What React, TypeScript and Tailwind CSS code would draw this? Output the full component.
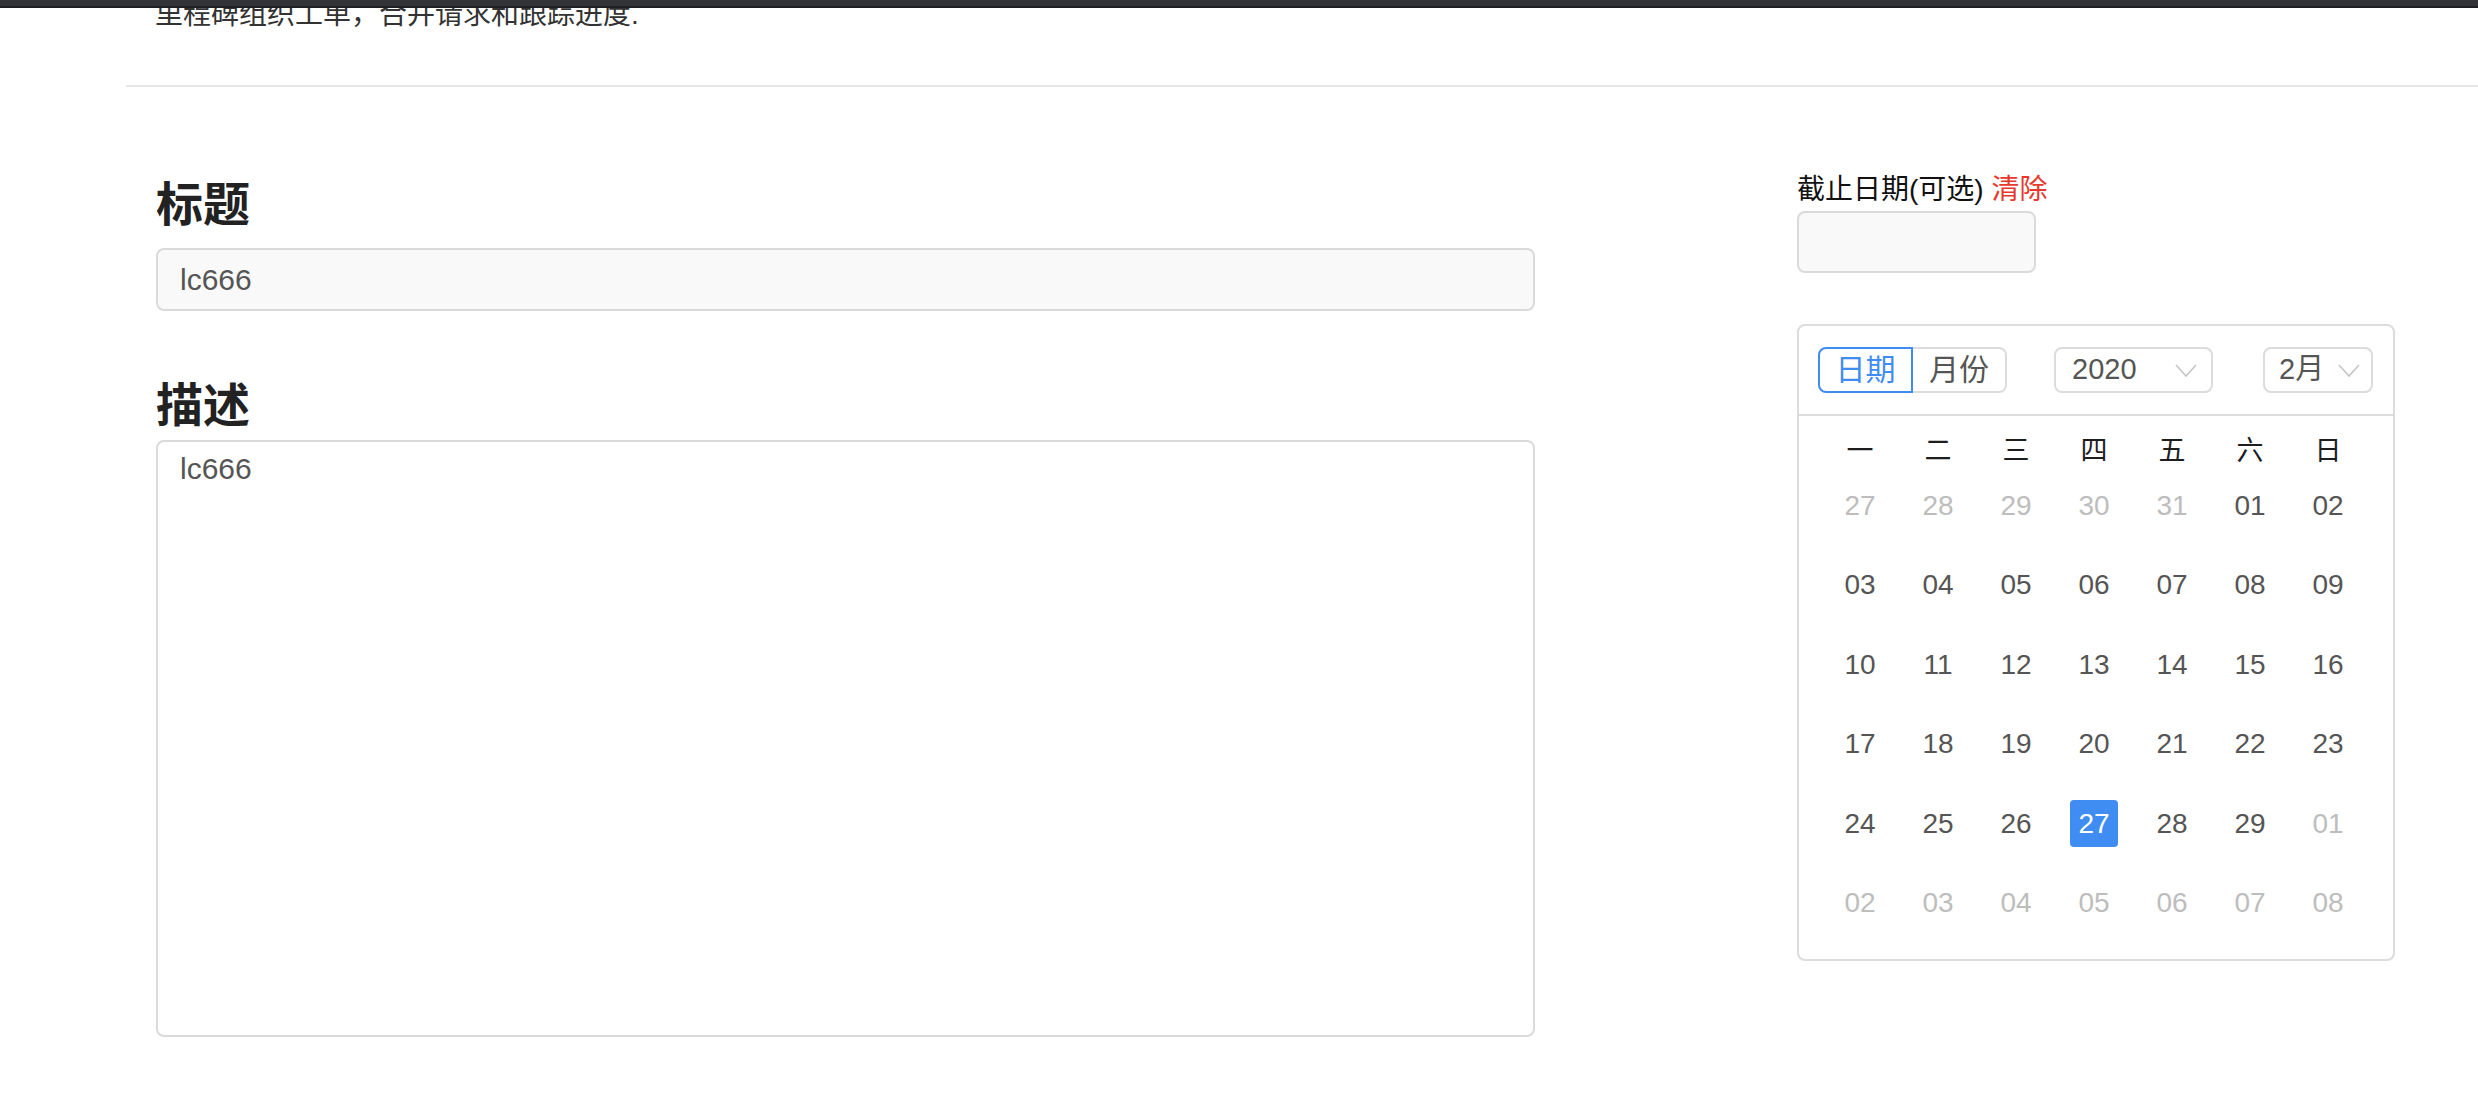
import * as React from 'react'

type Day = { label: string; muted: boolean }

const weekdays = ['一', '二', '三', '四', '五', '六', '日']

function buildDays(): Day[][] {
  const days: Day[] = []
  for (let d = 27; d <= 31; d++) days.push({ label: String(d), muted: true })
  for (let d = 1; d <= 29; d++) days.push({ label: String(d).padStart(2, '0'), muted: false })
  for (let d = 1; d <= 8; d++) days.push({ label: String(d).padStart(2, '0'), muted: true })
  const rows: Day[][] = []
  for (let i = 0; i < days.length; i += 7) rows.push(days.slice(i, i + 7))
  return rows
}

function Chevron() {
  return (
    <svg width="22" height="13" viewBox="0 0 22 13" fill="none" className="shrink-0">
      <polyline points="1,1 11,12 21,1" stroke="#c4c4c4" strokeWidth="1.6" />
    </svg>
  )
}

function Calendar() {
  const rows = buildDays()
  return (
    <div className="mt-[51px] h-[637px] w-[598px] rounded-[8px] border-2 border-[#dcdcdc]">
      <div className="flex items-center border-b-2 border-[#dcdcdc] pt-[21px] pr-[20px] pb-[21px] pl-[19px]">
        <div className="flex h-[46px] text-[30px] leading-[42px]">
          <div className="flex w-[95px] items-center justify-center rounded-l-[8px] border-2 border-[#3f8cf2] text-[#3f8cf2]">
            日期
          </div>
          <div className="flex w-[94px] items-center justify-center rounded-r-[8px] border-2 border-l-0 border-[#dcdcdc] text-[#555]">
            月份
          </div>
        </div>
        <div className="ml-[47px] flex h-[46px] w-[159px] items-center justify-between rounded-[8px] border-2 border-[#dcdcdc] pr-[14px] pl-[16px] text-[29px] text-[#555]">
          <span>2020</span>
          <Chevron />
        </div>
        <div className="ml-[50px] flex h-[46px] w-[110px] items-center rounded-[8px] border-2 border-[#dcdcdc] pl-[14px] text-[29px] text-[#555]">
          <span>2月</span>
          <span className="ml-[14px] flex">
            <Chevron />
          </span>
        </div>
      </div>
      <div className="pl-[22px]">
        <div className="mt-[15px] mb-[3px] grid h-[32px] grid-cols-[repeat(7,78px)] items-center text-[27px] text-[#1d1d1f]">
          {weekdays.map((w) => (
            <div key={w} className="text-center">
              {w}
            </div>
          ))}
        </div>
        {rows.map((row, i) => (
          <div key={i} className="grid h-[79.5px] grid-cols-[repeat(7,78px)] items-center text-[28px]">
            {row.map((day) => {
              const selected = !day.muted && day.label === '27'
              return (
                <div key={day.label + i} className="flex justify-center">
                  {selected ? (
                    <span className="flex h-[47px] w-[48px] items-center justify-center rounded-[4px] bg-[#3f8cf2] text-white">
                      {day.label}
                    </span>
                  ) : (
                    <span className={day.muted ? 'text-[#bdbdbd]' : 'text-[#555]'}>{day.label}</span>
                  )}
                </div>
              )
            })}
          </div>
        ))}
      </div>
    </div>
  )
}

export default function App() {
  return (
    <div className="relative min-h-screen bg-white font-['Liberation_Sans','Noto_Sans_CJK_SC',sans-serif]">
      <div className="absolute inset-x-0 top-0 h-[8px] border-b-2 border-[#1f2023] bg-[#333438]" />
      <div className="ml-[126px] h-[87px] overflow-hidden border-b-2 border-[#e6e6e6] pl-[29px]">
        <p className="mt-[-6px] text-[28px] leading-[42px] text-[#333]">里程碑组织工单，合并请求和跟踪进度.</p>
      </div>
      <div className="ml-[126px] flex items-start pl-[30px]">
        <div className="w-[1379px] pt-[84px]">
          <h2 className="h-[60px] font-['Noto_Sans_CJK_SC',sans-serif] text-[47px] leading-[60px] font-bold text-[#222]">
            标题
          </h2>
          <div className="mt-[17px] flex h-[63px] items-center rounded-[8px] border-2 border-[#dadada] bg-[#f9f9f9] pl-[22px] text-[30px] text-[#555]">
            lc666
          </div>
          <h2 className="mt-[61px] h-[60px] font-['Noto_Sans_CJK_SC',sans-serif] text-[47px] leading-[60px] font-bold text-[#222]">
            描述
          </h2>
          <div className="mt-[8px] h-[597px] rounded-[8px] border-2 border-[#dadada] bg-white pt-[7px] pl-[22px] text-[30px] leading-[40px] text-[#555]">
            lc666
          </div>
        </div>
        <div className="ml-[262px] w-[598px] pt-[83px]">
          <div className="h-[40px] text-[28px] leading-[40px] text-[#111]">
            截止日期(可选) <span className="text-[#e8382c]">清除</span>
          </div>
          <div className="mt-[1px] h-[62px] w-[239px] rounded-[8px] border-2 border-[#dadada] bg-[#f9f9f9]" />
          <Calendar />
        </div>
      </div>
    </div>
  )
}
